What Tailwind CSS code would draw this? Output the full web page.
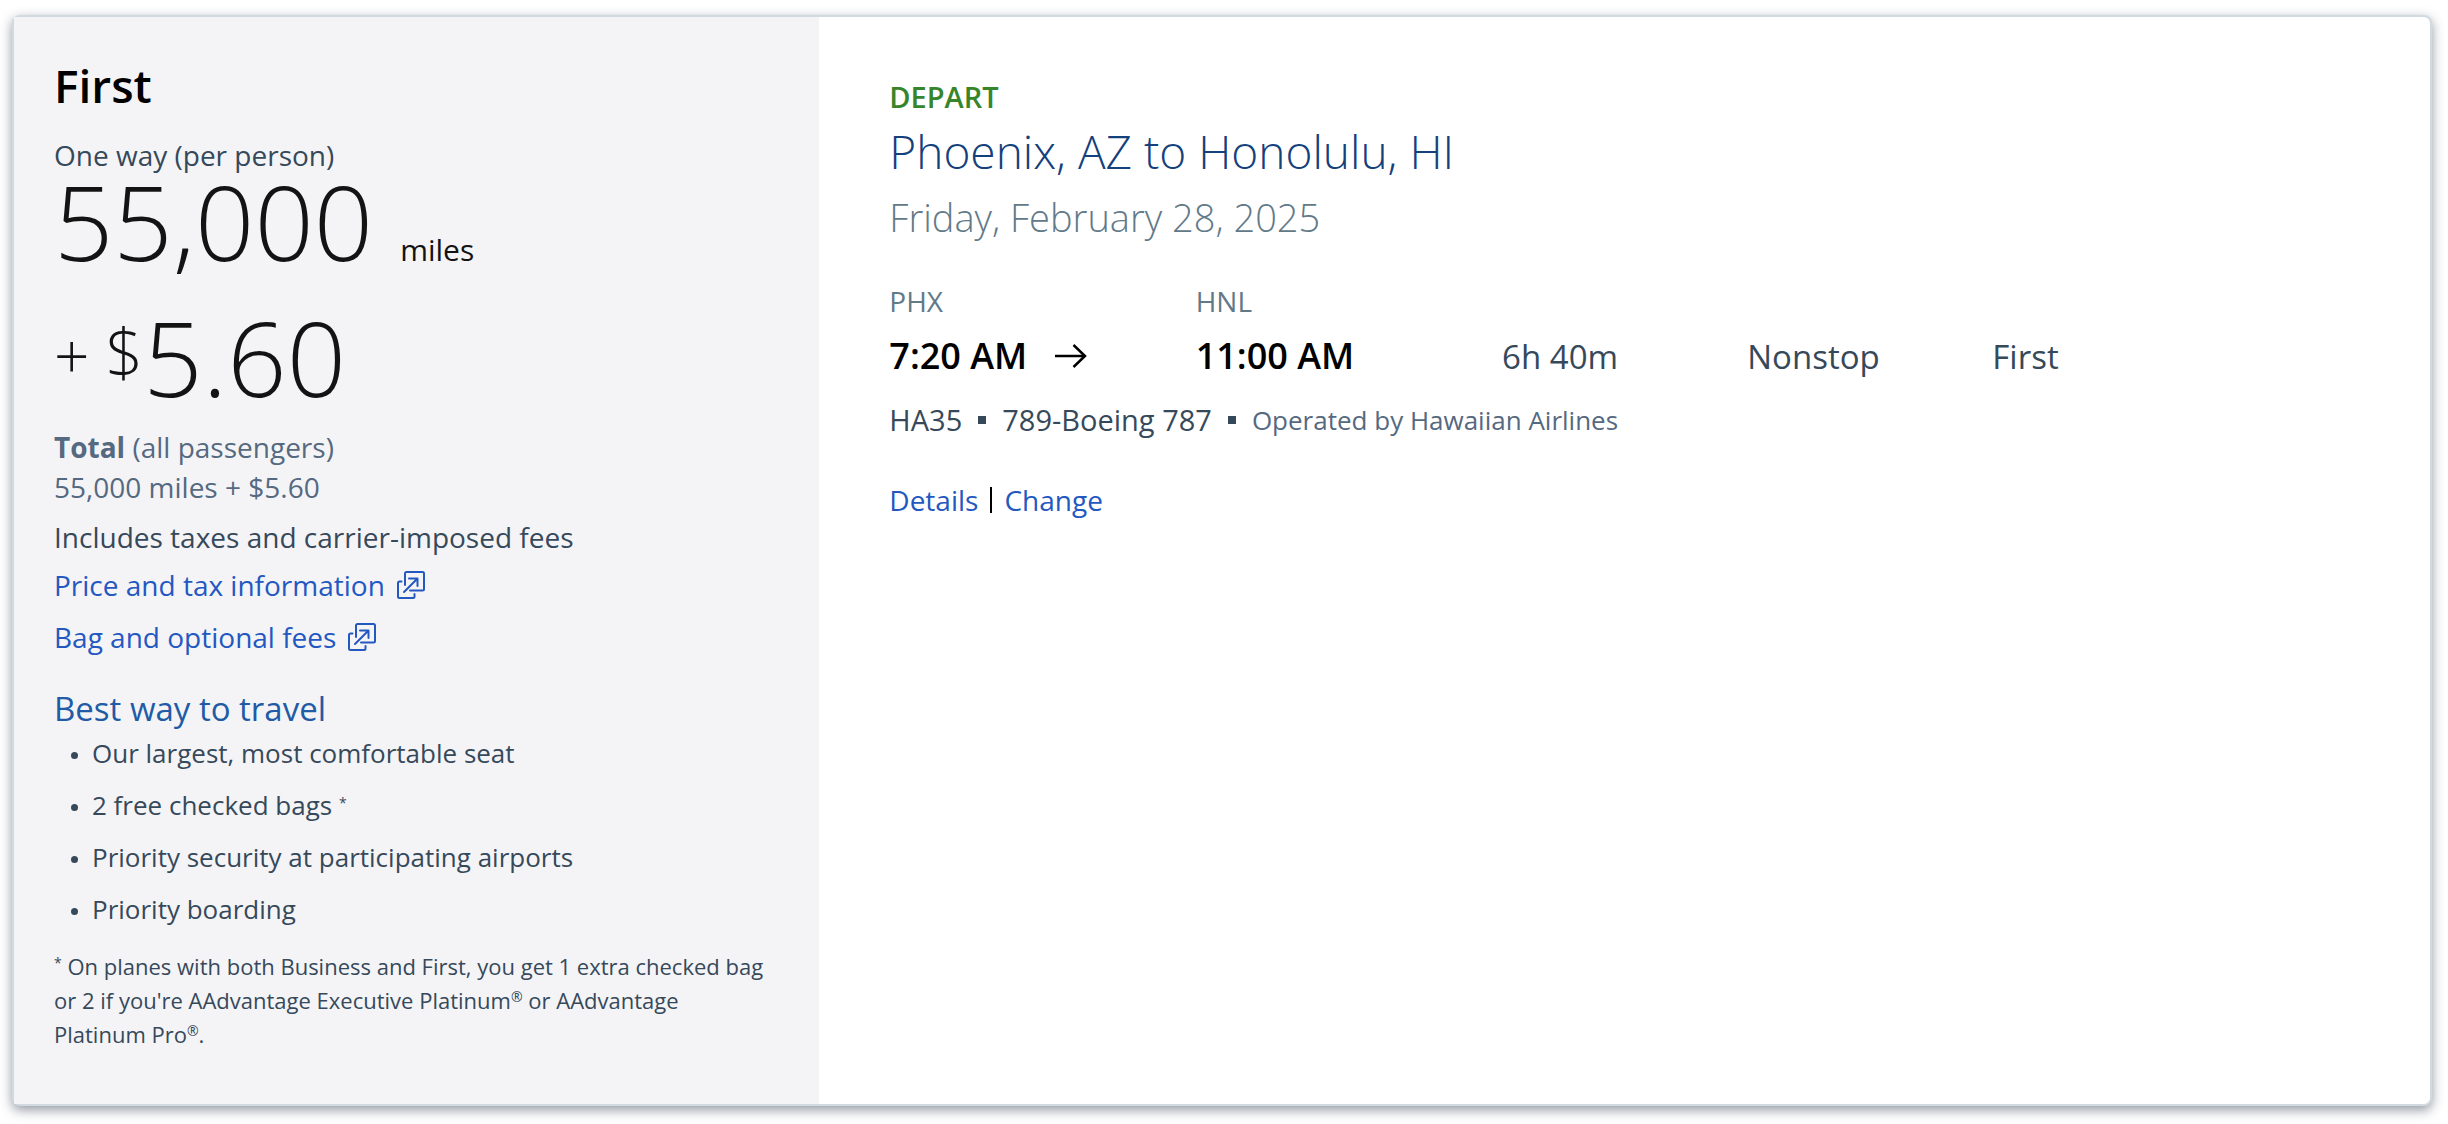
<!DOCTYPE html>
<html lang="en">

<head>
  <meta charset="UTF-8" />
  <meta name="viewport" content="width=device-width, initial-scale=1.0" />
  <title>Your trip: Phoenix to Honolulu</title>
  <script src="https://cdn.jsdelivr.net/npm/@tailwindcss/browser@4"></script>
</head>

<body class="min-h-screen bg-white font-['Open_Sans','Noto_Sans',sans-serif] text-[#36495a]">

  <!-- Icon for links that open a new window -->
  <svg class="hidden" aria-hidden="true">
    <symbol id="new-window" viewBox="0 0 28 28">
      <g fill="none" stroke="currentColor" stroke-width="2" stroke-linecap="round" stroke-linejoin="round">
        <path d="M13 19.5h12.5a1.5 1.5 0 0 0 1.5-1.5V2.5A1.5 1.5 0 0 0 25.5 1H9.5A1.5 1.5 0 0 0 8 2.5V14" />
        <path d="M4.5 10.5h-2A1.5 1.5 0 0 0 1 12v13.5A1.5 1.5 0 0 0 2.5 27H16a1.5 1.5 0 0 0 1.5-1.5V23" />
        <path d="M7 21 20.5 7.5M12 7.5h8.5V15" />
      </g>
    </symbol>
  </svg>

  <main class="pt-[15px] pb-4 pl-3 pr-4">
    <article class="flex bg-white border-2 border-[#d0dae0] rounded-lg shadow-[0_4px_12px_rgba(40,50,70,0.5)]">

      <!-- Price summary -->
      <aside class="w-1/3 bg-[#f4f4f7] pt-10 pb-[53px] pl-10 pr-12 text-[28px] leading-10">
        <h2 class="text-[46px] leading-[56px] font-semibold text-black">First</h2>

        <p class="mt-5.5">One way (per person)</p>
        <p class="mt-1.5 text-[104px] leading-20 font-light text-[#131313]">55,000 <span class="text-[30px] leading-none font-normal">miles</span></p>
        <p class="mt-13 flex items-start font-light text-[#131313]">
          <span class="text-[62px] leading-[76px] whitespace-pre">+ </span>
          <span class="text-[66px] leading-17">$</span>
          <span class="text-[104px] leading-20">5.60</span>
        </p>

        <div class="mt-7.5 text-[#556980]">
          <p><strong class="font-bold">Total</strong> (all passengers)</p>
          <p>55,000 miles + $5.60</p>
        </div>

        <p class="mt-2.5">Includes taxes and carrier-imposed fees</p>
        <p class="mt-2">
          <a href="#" class="inline-flex items-center gap-3 text-[#2458c1]">Price and tax information
            <svg class="size-7"><use href="#new-window" /></svg>
          </a>
        </p>
        <p class="mt-3">
          <a href="#" class="inline-flex items-center gap-3 text-[#2458c1]">Bag and optional fees
            <svg class="size-7"><use href="#new-window" /></svg>
          </a>
        </p>

        <h3 class="mt-7.5 text-[33px] leading-11 text-[#225ba5]">Best way to travel</h3>
        <ul class="mt-1 space-y-4 list-disc pl-[38px] text-[26px] leading-9 marker:text-[20px]">
          <li>Our largest, most comfortable seat</li>
          <li>2 free checked bags <sup class="text-[14px]">*</sup></li>
          <li>Priority security at participating airports</li>
          <li>Priority boarding</li>
        </ul>

        <p class="mt-5.5 text-[22px] leading-[34px]"><sup class="text-[14px]">*</sup> On planes with both Business and First, you get 1 extra checked bag or 2 if you're AAdvantage Executive Platinum<sup class="text-[14px]">®</sup> or AAdvantage Platinum Pro<sup class="text-[14px]">®</sup>.</p>
      </aside>

      <!-- Flight details -->
      <section class="flex-1 pt-15 px-[70px] text-[28px] leading-10">
        <p class="text-[29px] font-semibold text-[#36852b]">DEPART</p>
        <h2 class="mt-1.5 text-[46px] leading-[56px] font-light text-[#14407c]">Phoenix, AZ to Honolulu, HI</h2>
        <p class="mt-3.5 text-[38px] leading-12 font-light text-[#627a88]">Friday, February 28, 2025</p>

        <div class="mt-10 grid grid-cols-[5fr_5fr_4fr_4fr_6fr] items-baseline gap-y-[11px]">
          <span class="text-[#627a88]">PHX</span>
          <span class="col-span-4 text-[#627a88]">HNL</span>

          <span class="flex items-center gap-7 text-[36px] leading-12 font-semibold text-black">7:20 AM
            <svg class="w-8 h-6" viewBox="0 0 32 24" fill="none" stroke="currentColor" stroke-width="2.5">
              <path d="M0 12h30M18.5 1 30 12 18.5 23" />
            </svg>
          </span>
          <span class="text-[36px] leading-12 font-semibold text-black">11:00 AM</span>
          <span class="text-[33px] leading-11">6h 40m</span>
          <span class="text-[33px] leading-11">Nonstop</span>
          <span class="text-[33px] leading-11">First</span>
        </div>

        <div class="mt-5 flex items-center gap-4 text-[29px]">
          <span>HA35</span>
          <i class="size-2 bg-[#36495a]"></i>
          <span>789-Boeing 787</span>
          <i class="size-2 bg-[#36495a]"></i>
          <span class="text-[26px] text-[#556980]">Operated by Hawaiian Airlines</span>
        </div>

        <div class="mt-10 flex items-center gap-3 text-[#2458c1]">
          <a href="#">Details</a>
          <span class="w-0.5 h-6.5 bg-black"></span>
          <a href="#">Change</a>
        </div>
      </section>

    </article>
  </main>

</body>

</html>
